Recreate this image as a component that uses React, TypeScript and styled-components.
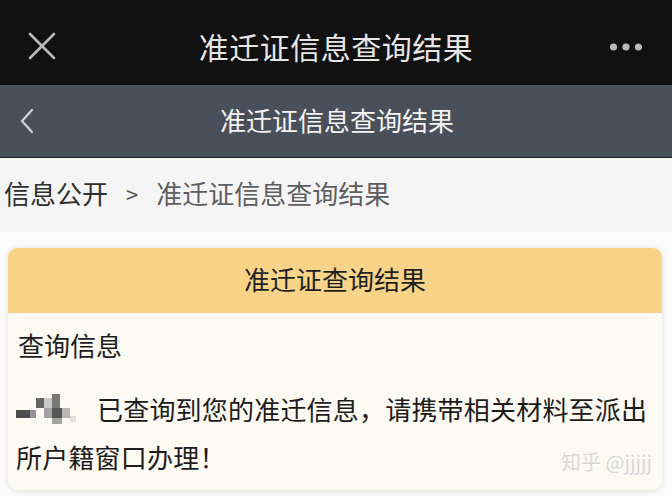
import styled, { createGlobalStyle } from 'styled-components';

const GlobalStyle = createGlobalStyle`
  html, body {
    margin: 0;
    padding: 0;
    background: #fbfbfb;
  }
  body {
    font-family: "Noto Sans CJK SC", "Noto Sans", sans-serif;
    width: 672px;
    height: 496px;
    overflow: hidden;
  }
`;

export default function App() {
  return (
    <Page>
      <GlobalStyle />
      <TopBar>
        <IconSlot $side="left">
          <svg width="28" height="28" viewBox="0 0 28 28">
            <path d="M2 2 L26 26 M26 2 L2 26" stroke="#b9b9b9" strokeWidth="2.6" strokeLinecap="round" />
          </svg>
        </IconSlot>
        <TopTitle>准迁证信息查询结果</TopTitle>
        <IconSlot $side="right">
          <svg width="32" height="10" viewBox="0 0 32 10">
            <circle cx="3.5" cy="5" r="3.6" fill="#b9b9b9" />
            <circle cx="16" cy="5" r="3.6" fill="#b9b9b9" />
            <circle cx="28.5" cy="5" r="3.6" fill="#b9b9b9" />
          </svg>
        </IconSlot>
      </TopBar>

      <NavBar>
        <BackSlot>
          <svg width="16" height="26" viewBox="0 0 16 26">
            <path d="M13 2 L3 13 L13 24" stroke="#d0d3d7" strokeWidth="2.2" fill="none" strokeLinecap="round" />
          </svg>
        </BackSlot>
        <NavTitle>准迁证信息查询结果</NavTitle>
      </NavBar>

      <Breadcrumb>
        <Crumb $current={false}>信息公开</Crumb>
        <Sep>&gt;</Sep>
        <Crumb $current>准迁证信息查询结果</Crumb>
      </Breadcrumb>

      <Content>
        <Card>
          <CardHeader>准迁证查询结果</CardHeader>
          <CardBody>
            <SectionLabel>查询信息</SectionLabel>
            <Message>
              <Mosaic width="66" height="30" viewBox="0 0 66 30">
                <rect x="0" y="16" width="14" height="8" fill="#3a3a3a" />
                <rect x="14" y="16" width="6" height="8" fill="#8a8a8a" />
                <rect x="20" y="4" width="8" height="10" fill="#555" />
                <rect x="28" y="4" width="8" height="10" fill="#c4c4c4" />
                <rect x="28" y="14" width="8" height="10" fill="#9a9a9a" />
                <rect x="36" y="0" width="8" height="14" fill="#6a6a6a" />
                <rect x="36" y="14" width="10" height="10" fill="#444" />
                <rect x="46" y="14" width="8" height="10" fill="#b0b0b0" />
                <rect x="36" y="24" width="10" height="6" fill="#9c9c9c" />
                <rect x="54" y="22" width="6" height="6" fill="#dcdcdc" />
              </Mosaic>
              已查询到您的准迁信息，请携带相关材料至派出所户籍窗口办理！
            </Message>
            <Watermark>知乎 @jjjjj</Watermark>
          </CardBody>
        </Card>
      </Content>
    </Page>
  );
}

const Page = styled.div`
  width: 672px;
  height: 496px;
  display: flex;
  flex-direction: column;
  overflow: hidden;
`;

const TopBar = styled.div`
  height: 85px;
  box-sizing: border-box;
  padding-top: 10px;
  background: #111111;
  display: flex;
  align-items: center;
  justify-content: center;
  position: relative;
`;

const IconSlot = styled.div<{ $side: 'left' | 'right' }>`
  position: absolute;
  top: 10px;
  bottom: 0;
  display: flex;
  align-items: center;
  ${({ $side }) => ($side === 'left' ? 'left: 28px; margin-top: -3px;' : 'right: 30px; margin-top: -2px;')}
`;

const TopTitle = styled.div`
  color: #e6e6e6;
  font-size: 30px;
  letter-spacing: 0.5px;
  margin-top: -4px;
`;

const NavBar = styled.div`
  height: 72px;
  background: #4a5059;
  border-bottom: 1px solid #1e2228;
  display: flex;
  align-items: center;
  justify-content: center;
  position: relative;
`;

const BackSlot = styled.div`
  position: absolute;
  left: 19px;
  top: 0;
  bottom: 0;
  display: flex;
  align-items: center;
`;

const NavTitle = styled.div`
  color: #f4f4f4;
  font-size: 26px;
  margin-left: 2px;
  margin-top: -3px;
`;

const Breadcrumb = styled.div`
  height: 74px;
  box-sizing: border-box;
  padding-bottom: 5px;
  background: #f5f5f5;
  display: flex;
  align-items: center;
  padding-left: 4px;
  font-size: 26px;
`;

const Crumb = styled.span<{ $current: boolean }>`
  color: ${({ $current }) => ($current ? '#5e5e5e' : '#2e2e2e')};
`;

const Sep = styled.span`
  color: #555;
  font-size: 22px;
  margin: 0 18px;
`;

const Content = styled.div`
  flex: 1;
  padding: 16px 10px 0 8px;
  background: #fbfbfb;
`;

const Card = styled.div`
  border-radius: 9px;
  overflow: hidden;
  background: #fdfaf3;
  box-shadow: 0 1px 6px rgba(0, 0, 0, 0.12);
  height: 242px;
`;

const CardHeader = styled.div`
  height: 65px;
  box-sizing: border-box;
  padding-bottom: 5px;
  background: #f8d388;
  color: #1f1f1f;
  font-size: 26px;
  display: flex;
  align-items: center;
  justify-content: center;
`;

const CardBody = styled.div`
  padding: 12px 6px 0 10px;
  position: relative;
  height: 177px;
  box-sizing: border-box;
`;

const SectionLabel = styled.div`
  font-size: 26px;
  color: #1c1c1c;
  line-height: 40px;
`;

const Message = styled.div`
  margin-top: 20px;
  margin-left: -2px;
  font-size: 26px;
  letter-spacing: 0.2px;
  color: #1c1c1c;
  line-height: 48px;
`;

const Mosaic = styled.svg`
  vertical-align: -4px;
  margin-right: 15px;
  opacity: 0.9;
`;

const Watermark = styled.div`
  position: absolute;
  right: 10px;
  bottom: 14px;
  color: #d8d8d8;
  font-size: 20px;
  text-shadow: 0 1px 0 #fff;
`;
